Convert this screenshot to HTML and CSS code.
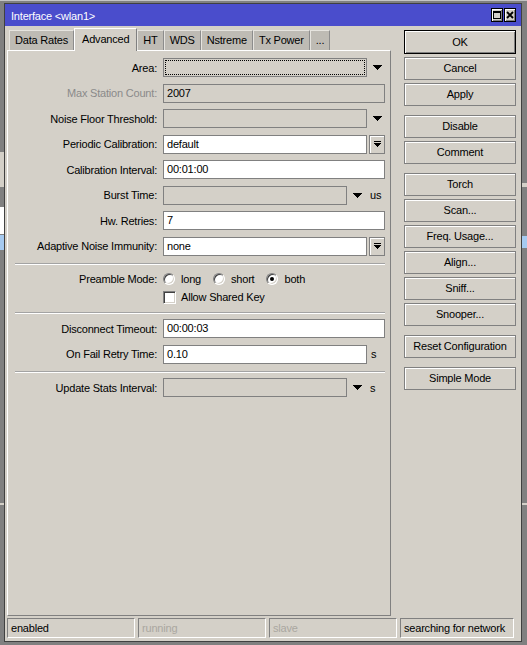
FILE: index.html
```html
<!DOCTYPE html>
<html>
<head>
<meta charset="utf-8">
<title>Interface &lt;wlan1&gt;</title>
<link rel="stylesheet" href="styles.css">
</head>
<body>
<div class="desk">
  <div class="strip s-top"></div>
  <div class="strip s-l1"></div>
  <div class="strip s-l2"></div>
  <div class="strip s-l3"></div>
  <div class="strip s-l4"></div>
  <div class="strip s-r1"></div>
  <div class="strip s-r2"></div>
  <div class="strip s-r4"></div>
</div>
<div class="window">
  <div class="titlebar">
    <span class="title">Interface &lt;wlan1&gt;</span>
    <div class="tbtns">
      <span class="tbtn"><svg width="8" height="8" viewBox="0 0 8 8" shape-rendering="crispEdges"><rect x="0" y="0" width="8" height="2" fill="#000"/><rect x="0.5" y="0.5" width="7" height="7" fill="none" stroke="#000"/></svg></span>
      <span class="tbtn"><svg width="8" height="8" viewBox="0 0 8 8"><path d="M1 1L7 7M7 1L1 7" stroke="#000" stroke-width="1.9" fill="none"/></svg></span>
    </div>
  </div>
  <div class="client">
    <div class="main">
      <div class="left">
        <div class="tabs">
          <div class="tab">Data Rates</div>
          <div class="tab active">Advanced</div>
          <div class="tab">HT</div>
          <div class="tab">WDS</div>
          <div class="tab">Nstreme</div>
          <div class="tab">Tx Power</div>
          <div class="tab">...</div>
        </div>
        <div class="panel">
          <div class="sec">
            <div class="row"><span class="lbl">Area:</span><div class="fld f-mid dis focus"></div><span class="arr"><svg width="9" height="5" viewBox="0 0 9 5" shape-rendering="crispEdges"><path d="M0 0h9v1h-9zM1 1h7v1h-7zM2 2h5v1h-5zM3 3h3v1h-3zM4 4h1v1h-1z" fill="#000"/></svg></span></div>
            <div class="row"><span class="lbl gray">Max Station Count:</span><div class="fld f-full dis">2007</div></div>
            <div class="row"><span class="lbl">Noise Floor Threshold:</span><div class="fld f-mid dis"></div><span class="arr"><svg width="9" height="5" viewBox="0 0 9 5" shape-rendering="crispEdges"><path d="M0 0h9v1h-9zM1 1h7v1h-7zM2 2h5v1h-5zM3 3h3v1h-3zM4 4h1v1h-1z" fill="#000"/></svg></span></div>
            <div class="row"><span class="lbl">Periodic Calibration:</span><div class="fld f-mid white">default</div><span class="spin"><svg width="7" height="7" viewBox="0 0 7 7" shape-rendering="crispEdges"><path d="M0 0h7v1h-7zM0 2h7v1h-7zM1 3h5v1h-5zM2 4h3v1h-3zM3 5h1v1h-1z" fill="#000"/></svg></span></div>
            <div class="row"><span class="lbl">Calibration Interval:</span><div class="fld f-full white">00:01:00</div></div>
            <div class="row"><span class="lbl">Burst Time:</span><div class="fld f-short dis"></div><span class="arr arr-w"><svg width="9" height="5" viewBox="0 0 9 5" shape-rendering="crispEdges"><path d="M0 0h9v1h-9zM1 1h7v1h-7zM2 2h5v1h-5zM3 3h3v1h-3zM4 4h1v1h-1z" fill="#000"/></svg></span><span class="unit">us</span></div>
            <div class="row"><span class="lbl">Hw. Retries:</span><div class="fld f-full white">7</div></div>
            <div class="row"><span class="lbl">Adaptive Noise Immunity:</span><div class="fld f-mid white">none</div><span class="spin"><svg width="7" height="7" viewBox="0 0 7 7" shape-rendering="crispEdges"><path d="M0 0h7v1h-7zM0 2h7v1h-7zM1 3h5v1h-5zM2 4h3v1h-3zM3 5h1v1h-1z" fill="#000"/></svg></span></div>
          </div>
          <div class="sep sep-a"></div>
          <div class="row radios">
            <span class="lbl">Preamble Mode:</span>
            <span class="opt"><span class="radio"></span>long</span>
            <span class="opt"><span class="radio"></span>short</span>
            <span class="opt"><span class="radio on"></span>both</span>
          </div>
          <div class="row chk-row">
            <span class="lbl"></span>
            <span class="check"></span>Allow Shared Key
          </div>
          <div class="sep sep-b"></div>
          <div class="sec after-sep">
            <div class="row"><span class="lbl">Disconnect Timeout:</span><div class="fld f-full white">00:00:03</div></div>
            <div class="row"><span class="lbl">On Fail Retry Time:</span><div class="fld f-mid white">0.10</div><span class="unit unit-s">s</span></div>
          </div>
          <div class="sep sep-a"></div>
          <div class="sec after-sep">
            <div class="row"><span class="lbl">Update Stats Interval:</span><div class="fld f-short dis"></div><span class="arr arr-w"><svg width="9" height="5" viewBox="0 0 9 5" shape-rendering="crispEdges"><path d="M0 0h9v1h-9zM1 1h7v1h-7zM2 2h5v1h-5zM3 3h3v1h-3zM4 4h1v1h-1z" fill="#000"/></svg></span><span class="unit">s</span></div>
          </div>
        </div>
      </div>
      <div class="btns">
        <div class="btn def">OK</div>
        <div class="btn">Cancel</div>
        <div class="btn">Apply</div>
        <div class="btn grp">Disable</div>
        <div class="btn">Comment</div>
        <div class="btn grp">Torch</div>
        <div class="btn">Scan...</div>
        <div class="btn">Freq. Usage...</div>
        <div class="btn">Align...</div>
        <div class="btn">Sniff...</div>
        <div class="btn">Snooper...</div>
        <div class="btn grp">Reset Configuration</div>
        <div class="btn grp">Simple Mode</div>
      </div>
    </div>
    <div class="status">
      <div class="cell">enabled</div>
      <div class="cell muted">running</div>
      <div class="cell muted">slave</div>
      <div class="cell last">searching for network</div>
    </div>
  </div>
</div>
</body>
</html>
```

FILE: styles.css
```css
body {
  margin: 0;
  width: 527px;
  height: 645px;
  overflow: hidden;
  position: relative;
  background: #808080;
  font-family: "Liberation Sans", Arial, sans-serif;
  font-size: 11px;
  letter-spacing: -0.2px;
  color: #000;
}

.desk { position: absolute; inset: 0; }
.strip { position: absolute; }
.s-top { left: 0; top: 0; width: 527px; height: 1px; background: #c4c4c4; }
.s-l1 { left: 0; top: 152px; width: 4px; height: 35px; background: #d4d0c8; }
.s-l2 { left: 0; top: 207px; width: 4px; height: 27px; background: #ffffff; }
.s-l3 { left: 0; top: 235px; width: 4px; height: 15px; background: #a6caf0; }
.s-l4 { left: 0; top: 503px; width: 4px; height: 2px; background: #d4d0c8; }
.s-r1 { right: 0; top: 183px; width: 5px; height: 4px; background: #d4d0c8; }
.s-r2 { right: 0; top: 236px; width: 5px; height: 12px; background: #a6caf0; }
.s-r4 { right: 0; top: 503px; width: 5px; height: 2px; background: #d4d0c8; }

.window {
  position: absolute;
  left: 4px;
  top: 3px;
  width: 518px;
  height: 639px;
  box-sizing: border-box;
  border: 1px solid #404040;
  background: #d4d0c8;
  display: flex;
  flex-direction: column;
}

.titlebar {
  height: 22px;
  flex: none;
  background: #4a4dcc;
  color: #fff;
  display: flex;
  align-items: center;
  padding-left: 6px;
}
.title { flex: 1; padding-top: 1px; }
.tbtns { display: flex; gap: 1px; margin-right: 5px; }
.tbtn {
  width: 12px;
  height: 14px;
  box-sizing: border-box;
  border: 1px solid #000;
  background: #d4d0c8;
  box-shadow: inset 1px 1px 0 #fff, inset -1px -1px 0 #808080;
  display: flex;
  align-items: center;
  justify-content: center;
}

.client { flex: 1; display: flex; flex-direction: column; }
.main { display: flex; height: 590px; flex: none; }
.left { margin-left: 2px; width: 384px; display: flex; flex-direction: column; flex: none; }

.tabs {
  height: 24px;
  flex: none;
  display: flex;
  align-items: flex-end;
  padding-left: 2px;
  position: relative;
  z-index: 1;
}
.tab {
  height: 20px;
  box-sizing: border-box;
  padding: 0 5px;
  line-height: 18px;
  background: #bebbb4;
  border-top: 1px solid #e6e4df;
  border-left: 1px solid #e6e4df;
  border-right: 1px solid #8c8c8c;
  white-space: nowrap;
}
.tab.active {
  height: 23px;
  margin-bottom: -1px;
  padding: 0 7px 2px;
  line-height: 20px;
  background: #d4d0c8;
  border-top-color: #fff;
  border-left-color: #fff;
  border-right-color: #808080;
}

.panel {
  height: 566px;
  box-sizing: border-box;
  border: 1px solid;
  border-color: #fff #808080 #808080 #fff;
  padding-top: 7px;
}
.sec { display: flex; flex-direction: column; gap: 6.5px; }
.after-sep { margin-top: 5px; }
.row { display: flex; align-items: center; height: 19px; flex: none; }
.lbl { width: 149px; margin-right: 6px; text-align: right; white-space: nowrap; flex: none; }
.gray { color: #8a8a8a; }

.fld {
  height: 19px;
  box-sizing: border-box;
  border: 1px solid #808080;
  padding-left: 3px;
  line-height: 17px;
  flex: none;
  white-space: nowrap;
}
.f-full { width: 222px; }
.f-mid { width: 204px; }
.f-short { width: 184px; }
.white { background: #fff; }
.dis { background: #d4d0c8; }
.focus { outline: 1px dotted #000; outline-offset: -3px; }

.arr {
  width: 18px;
  padding-left: 6px;
  box-sizing: border-box;
  display: flex;
  align-items: center;
  flex: none;
}
.arr-w { width: 20px; }
.unit { padding-left: 3px; }
.unit-s { padding-left: 4px; }

.spin {
  margin-left: 2px;
  width: 16px;
  height: 19px;
  box-sizing: border-box;
  border: 1px solid #808080;
  box-shadow: inset 1px 1px 0 #fff;
  display: flex;
  align-items: center;
  justify-content: center;
  flex: none;
}

.sep {
  margin-left: 7px;
  width: 370px;
  border-top: 1px solid #a3a3a3;
  border-bottom: 1px solid #fff;
}
.sep-a { margin-top: 7.5px; }
.sep-b { margin-top: 6px; }

.radios { margin-top: 4px; }
.chk-row { height: 18px; }
.opt { display: flex; align-items: center; margin-right: 12px; }
.radio {
  width: 12px;
  height: 12px;
  box-sizing: border-box;
  border-radius: 50%;
  background: #fff;
  border: 1px solid;
  border-color: #808080 #fff #fff #808080;
  box-shadow: inset 1px 1px 0 #404040, inset -1px -1px 0 #d4d0c8;
  margin-right: 6px;
  display: flex;
  align-items: center;
  justify-content: center;
}
.radio.on::after {
  content: "";
  width: 4px;
  height: 4px;
  border-radius: 50%;
  background: #000;
}
.check {
  width: 13px;
  height: 13px;
  box-sizing: border-box;
  background: #fff;
  border: 1px solid;
  border-color: #808080 #fff #fff #808080;
  box-shadow: inset 1px 1px 0 #404040, inset -1px -1px 0 #d4d0c8;
  margin-right: 5px;
  flex: none;
}

.btns {
  width: 112px;
  margin-left: 13px;
  margin-top: 4px;
  display: flex;
  flex-direction: column;
  flex: none;
}
.btn {
  height: 23px;
  box-sizing: border-box;
  margin-bottom: 3px;
  border: 1px solid #808080;
  box-shadow: inset 1px 1px 0 #fff;
  text-align: center;
  line-height: 21px;
  white-space: nowrap;
}
.btn.def {
  height: 24px;
  border-color: #000;
  box-shadow: inset 1px 1px 0 #fff, inset -1px -1px 0 #808080;
  line-height: 22px;
}
.btn.grp { margin-top: 6px; }

.status { display: flex; margin: 2px 0 0 2px; }
.cell {
  width: 128px;
  height: 20px;
  box-sizing: border-box;
  margin-right: 3px;
  border: 1px solid;
  border-color: #808080 #fff #fff #808080;
  padding-left: 3px;
  line-height: 18px;
  white-space: nowrap;
  overflow: hidden;
}
.cell.last { width: 114px; margin-right: 0; }
.muted { color: #aaa7a0; }
```
